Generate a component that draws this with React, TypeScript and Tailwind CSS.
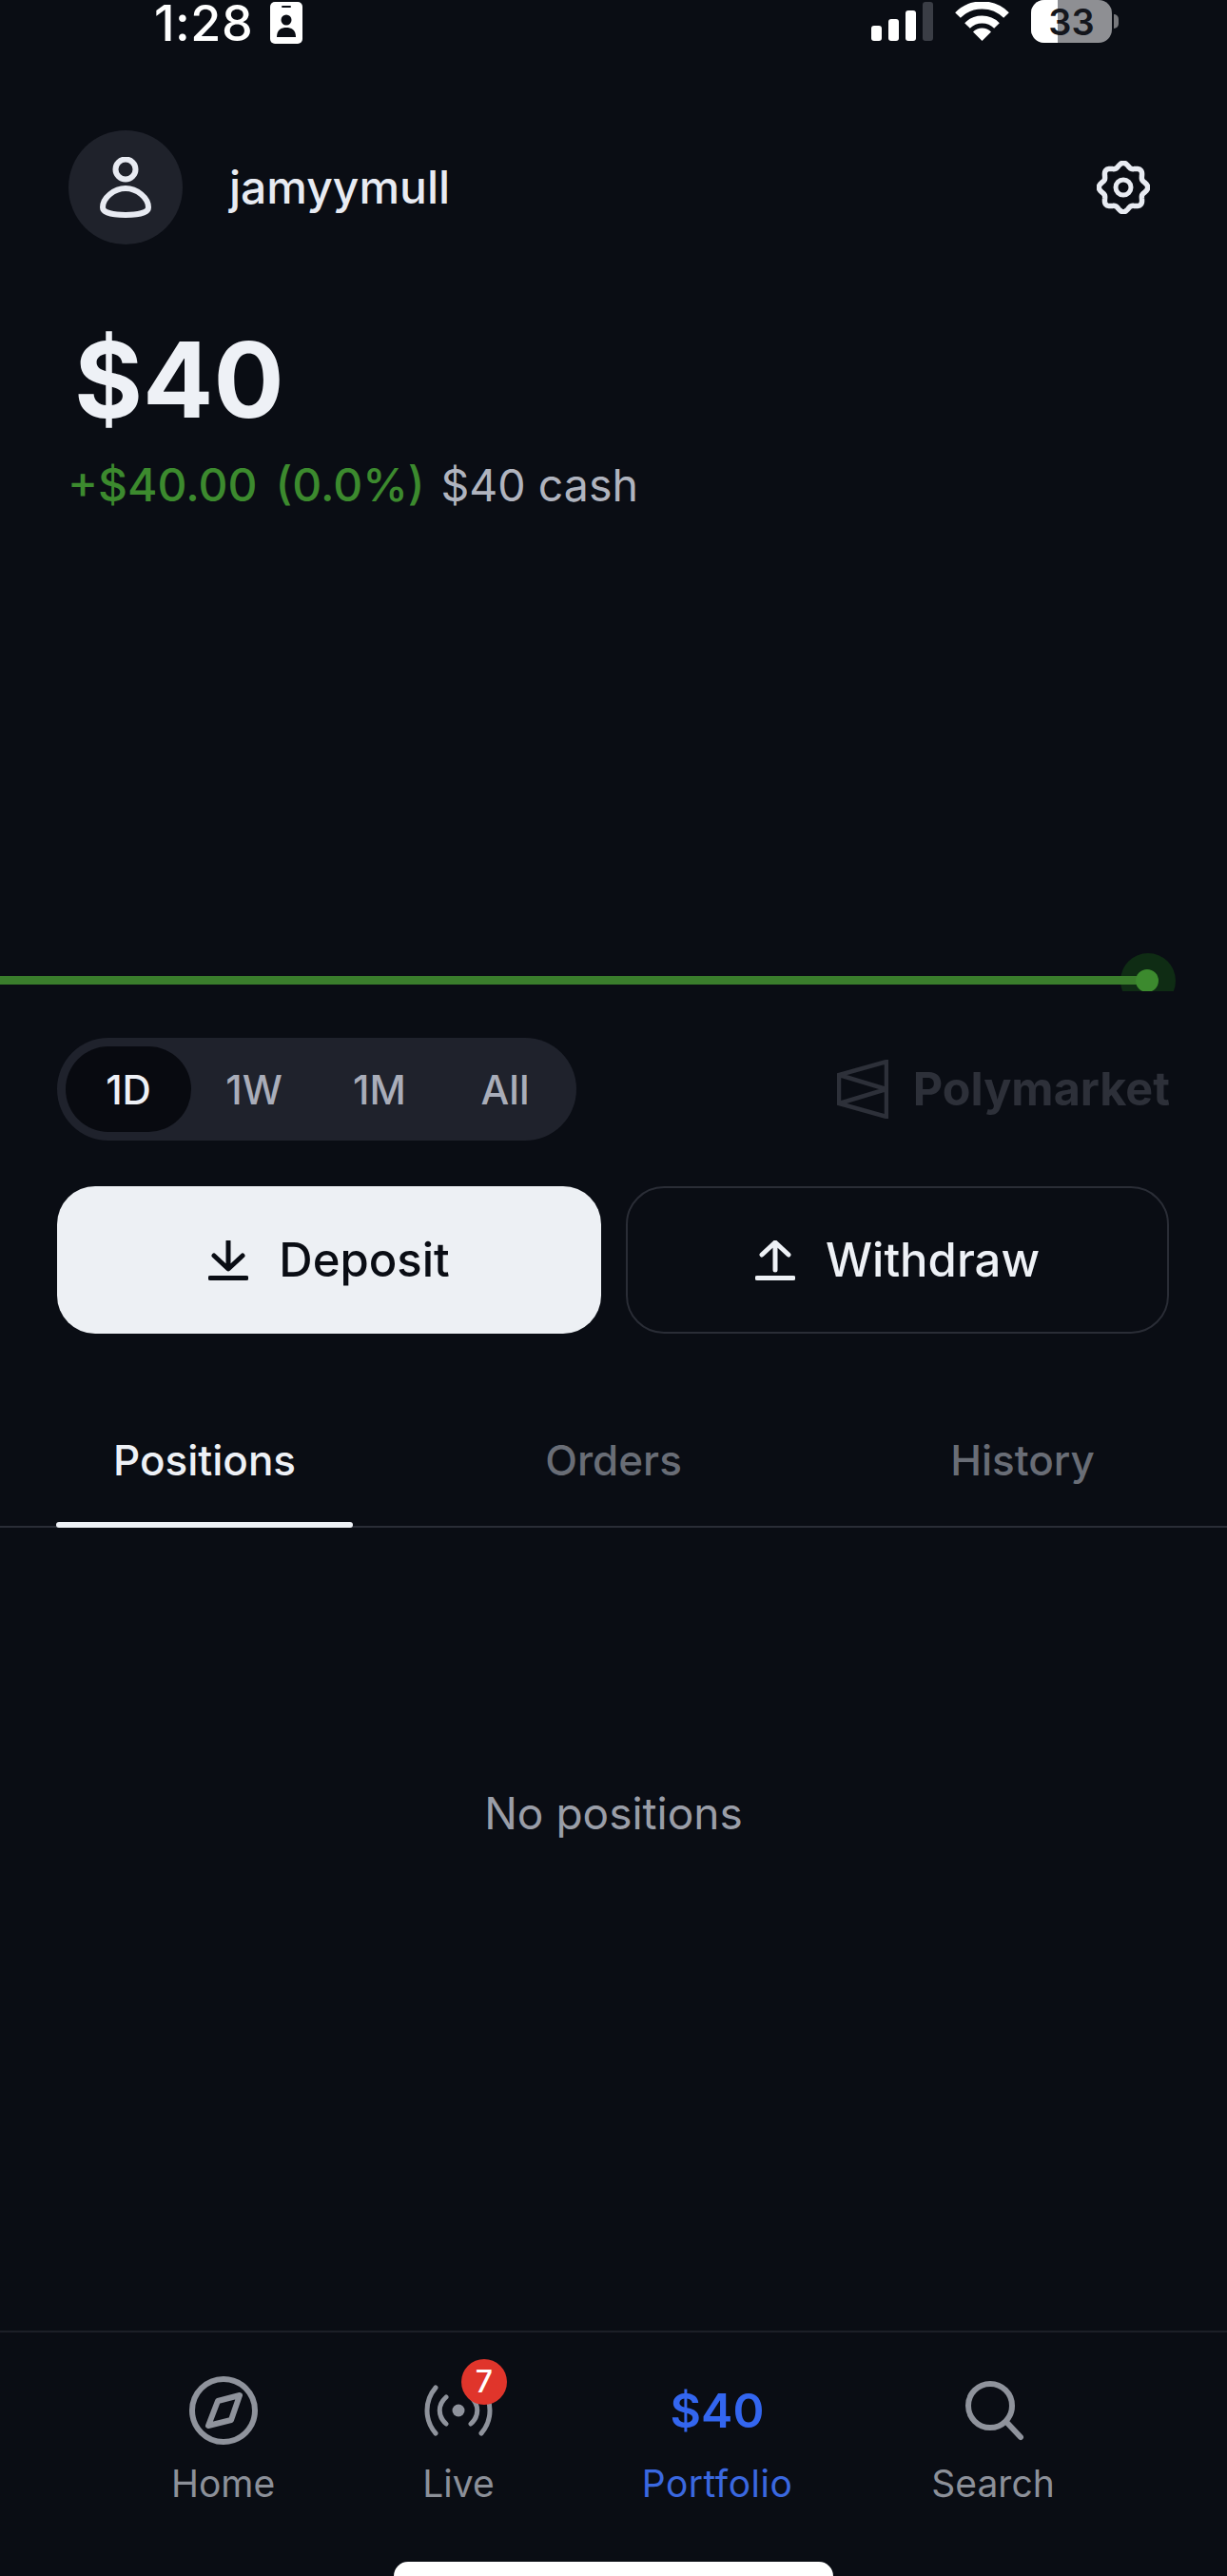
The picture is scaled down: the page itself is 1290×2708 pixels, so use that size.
import React from "react";

function gearPath() {
  const pts: string[] = [];
  for (let i = 0; i < 240; i++) {
    const t = (i / 240) * Math.PI * 2;
    const r = 23.5 + 2.2 * Math.cos(8 * t);
    const x = 28 + r * Math.sin(t);
    const y = 28 - r * Math.cos(t);
    pts.push(`${i === 0 ? "M" : "L"}${x.toFixed(2)} ${y.toFixed(2)}`);
  }
  return pts.join(" ") + " Z";
}

function TabLabel({ label, active }: { label: string; active?: boolean }) {
  return (
    <div className="flex flex-col items-center">
      <div className={`h-[106px] pt-[14px] text-[44px] leading-[54px] font-medium ${active ? "text-[#eef1f6]" : "text-[#696d76]"}`}>{label}</div>
      {active ? <div className="w-[312px] h-[6px] rounded-full bg-[#eef1f6] mb-[-2px]" /> : <div className="h-[6px] mb-[-2px]" />}
    </div>
  );
}

function NavItem({ icon, label, color, extra }: { icon: React.ReactNode; label: string; color: string; extra?: string }) {
  return (
    <div className={`flex flex-col items-center ${extra ?? ""}`}>
      <div className="h-[72px] w-[72px] flex items-center justify-center relative">{icon}</div>
      <div className={`mt-[18px] text-[39px] leading-[46px] ${color}`}>{label}</div>
    </div>
  );
}

export default function App() {
  return (
    <div className="w-[1290px] h-[2708px] bg-[#0a0d14] flex flex-col overflow-hidden text-[#eef1f6]" style={{ fontFamily: "Inter, 'Noto Sans', sans-serif" }}>
      {/* status bar */}
      <div className="h-[48px] flex items-start pl-[162px] pr-[114px] shrink-0">
        <div className="text-[52px] leading-[50px] font-medium text-white tracking-[0.5px] w-[107px]">1:28</div>
        <svg width="34" height="44" viewBox="0 0 34 44" className="ml-[15px] mt-[2px]">
          <rect width="34" height="44" rx="5" fill="#fff" />
          <rect x="12" y="4" width="10" height="2" rx="1" fill="#0a0d14" />
          <circle cx="17" cy="19" r="5.5" fill="#0a0d14" />
          <path d="M7 37 C7 29 12 27 17 27 C22 27 27 29 27 37 Z" fill="#0a0d14" />
        </svg>
        <div className="flex-1" />
        <svg width="65" height="41" viewBox="0 0 65 41" className="mt-[2px]">
          <rect x="0" y="25" width="11" height="16" rx="3" fill="#fff" />
          <rect x="18" y="18" width="11" height="23" rx="3" fill="#fff" />
          <rect x="36" y="9" width="11" height="32" rx="3" fill="#fff" />
          <rect x="54" y="0" width="11" height="41" rx="3" fill="#3a3d45" />
        </svg>
        <svg width="57" height="41" viewBox="0 0 57 41" className="ml-[23px] mt-[2px]">
          <path d="M3 14 A36 36 0 0 1 54 14" fill="none" stroke="#fff" strokeWidth="8" />
          <path d="M13 25 A22 22 0 0 1 44 25" fill="none" stroke="#fff" strokeWidth="8" />
          <path d="M28.5 41 L19 31.5 A13.5 13.5 0 0 1 38 31.5 Z" fill="#fff" />
        </svg>
        <div className="ml-[23px] flex items-center">
          <div className="relative w-[85px] h-[45px] rounded-[14px] overflow-hidden flex bg-[#8e8f93]">
            <div className="w-[28px] bg-white" />
            <div className="absolute inset-0 flex items-center justify-center text-[38px] font-semibold text-[#14161c] leading-none">33</div>
          </div>
          <div className="ml-[2px] w-[5px] h-[15px] rounded-r-full bg-[#77787c]" />
        </div>
      </div>

      {/* header */}
      <div className="mt-[89px] flex items-center pl-[72px] pr-[81px] shrink-0">
        <div className="w-[120px] h-[120px] rounded-full bg-[#1f222b] flex items-center justify-center">
          <svg width="54" height="64" viewBox="0 0 54 64">
            <circle cx="27" cy="13" r="10.5" fill="none" stroke="#e8ebf2" strokeWidth="6" />
            <path d="M27 33 C15 33 3 43 3 53 C3 59 15 61 27 61 C39 61 51 59 51 53 C51 43 39 33 27 33 Z" fill="none" stroke="#e8ebf2" strokeWidth="6" />
          </svg>
        </div>
        <div className="ml-[49px] text-[48px] leading-[56px] text-[#e8ebf2] font-medium">jamyymull</div>
        <div className="flex-1" />
        <svg width="56" height="56" viewBox="0 0 56 56">
          <path d={gearPath()} fill="none" stroke="#e8ebf2" strokeWidth="5.5" />
          <circle cx="28" cy="28" r="8" fill="none" stroke="#e8ebf2" strokeWidth="5" />
        </svg>
      </div>

      {/* balance */}
      <div className="mt-[82px] pl-[78px] text-[110px] leading-[120px] font-bold text-[#eef1f6] shrink-0">$40</div>
      <div className="mt-[21px] pl-[71px] flex items-baseline text-[48px] leading-[60px] shrink-0">
        <span className="text-[#3c8a2e] font-medium">+$40.00</span>
        <span className="ml-[19px] text-[#3c8a2e] font-medium">(0.0%)</span>
        <span className="ml-[17px] text-[46.5px] text-[#b0b4bf]">$40 cash</span>
      </div>

      {/* chart */}
      <svg width="1290" height="41" viewBox="0 0 1290 41" className="mt-[461px] shrink-0 block">
        <circle cx="1207" cy="30" r="29" fill="#0f2c14" />
        <rect x="0" y="25" width="1206" height="9" fill="#3a7d2c" />
        <circle cx="1206" cy="30" r="12" fill="#3c8a2e" />
      </svg>

      {/* range selector */}
      <div className="mt-[49px] flex items-center justify-between pl-[60px] pr-[60px] shrink-0">
        <div className="w-[546px] h-[108px] rounded-full bg-[#1f222c] flex items-center pl-[9px] text-[42px]">
          <div className="w-[132px] h-[90px] rounded-full bg-[#080a10] flex items-center justify-center text-[#eef1f6] font-medium">1D</div>
          <div className="w-[132px] text-center text-[#a9adb9] font-medium">1W</div>
          <div className="w-[132px] text-center text-[#a9adb9] font-medium">1M</div>
          <div className="w-[132px] text-center text-[#a9adb9] font-medium">All</div>
        </div>
        <div className="flex items-center">
          <svg width="54" height="62" viewBox="0 0 54 62">
            <path d="M52 2 L2 16 L52 31 L2 46 L52 60 Z M2 16 L2 46" fill="none" stroke="#2d3039" strokeWidth="4.5" strokeLinejoin="miter" />
          </svg>
          <div className="ml-[26px] text-[48.5px] leading-[60px] font-bold text-[#2d3039]">Polymarket</div>
        </div>
      </div>

      {/* buttons */}
      <div className="mt-[48px] flex gap-[26px] pl-[60px] pr-[61px] shrink-0">
        <div className="w-[572px] h-[155px] rounded-[40px] bg-[#edf0f4] flex items-center justify-center text-[#0a0d14]">
          <svg width="42" height="42" viewBox="0 0 42 42">
            <path d="M21 1 V29 M6 16 L21 30 L36 16" fill="none" stroke="#0a0d14" strokeWidth="5" strokeLinecap="round" strokeLinejoin="round" />
            <path d="M2 39.5 H40" fill="none" stroke="#0a0d14" strokeWidth="5" strokeLinecap="round" />
          </svg>
          <div className="ml-[32px] text-[49px] leading-[58px] font-medium">Deposit</div>
        </div>
        <div className="flex-1 h-[155px] rounded-[40px] border-2 border-[#2a2d36] flex items-center justify-center">
          <svg width="42" height="42" viewBox="0 0 42 42">
            <path d="M21 3 V31 M7 15 L21 2 L35 15" fill="none" stroke="#eef1f6" strokeWidth="5" strokeLinecap="round" strokeLinejoin="round" />
            <path d="M2 39.5 H40" fill="none" stroke="#eef1f6" strokeWidth="5" strokeLinecap="round" />
          </svg>
          <div className="ml-[32px] text-[49px] leading-[58px] font-medium">Withdraw</div>
        </div>
      </div>

      {/* tabs */}
      <div className="mt-[92px] grid grid-cols-3 border-b-2 border-[#2a2d36] shrink-0">
        <TabLabel label="Positions" active />
        <TabLabel label="Orders" />
        <TabLabel label="History" />
      </div>

      {/* empty state */}
      <div className="flex-1 flex justify-center pt-[272px] text-[46px] leading-[56px] text-[#9a9ea8]">No positions</div>

      {/* bottom nav */}
      <div className="h-[258px] border-t-2 border-[#1c1f27] shrink-0 flex flex-col">
        <div className="flex pl-[180px] pt-[46px]">
          <NavItem
            label="Home"
            color="text-[#8c9099]"
            icon={
              <svg width="72" height="72" viewBox="0 0 72 72">
                <circle cx="36" cy="36" r="33" fill="none" stroke="#8f939c" strokeWidth="6" />
                <path d="M53 20 L30 26 L20 52 L44 46 Z" fill="none" stroke="#8f939c" strokeWidth="6" strokeLinejoin="round" />
              </svg>
            }
          />
          <NavItem
            label="Live"
            color="text-[#8c9099]"
            extra="ml-[155px]"
            icon={
              <>
                <svg width="72" height="72" viewBox="0 0 72 72">
                  <path d="M12 12 C0 26 0 46 12 60 M60 12 C72 26 72 46 60 60 M23 22 C14 30 14 42 23 50 M49 22 C58 30 58 42 49 50" fill="none" stroke="#8f939c" strokeWidth="5" strokeLinecap="round" />
                  <circle cx="36" cy="36" r="6.5" fill="#8f939c" />
                </svg>
                <div className="absolute left-[39px] top-[-18px] w-[48px] h-[48px] rounded-full bg-[#e0352b] flex items-center justify-center text-white text-[32px] font-medium leading-none">7</div>
              </>
            }
          />
          <NavItem
            label="Portfolio"
            color="text-[#3a68e0] tracking-[0.5px]"
            extra="ml-[155px]"
            icon={<div className="text-[50px] leading-[72px] font-semibold text-[#3366f0] tracking-normal">$40</div>}
          />
          <NavItem
            label="Search"
            color="text-[#8c9099]"
            extra="ml-[146px]"
            icon={
              <svg width="72" height="72" viewBox="0 0 72 72">
                <circle cx="33" cy="31" r="23" fill="none" stroke="#8f939c" strokeWidth="6" />
                <path d="M50 48 L65 64" fill="none" stroke="#8f939c" strokeWidth="6" strokeLinecap="round" />
              </svg>
            }
          />
        </div>
        <div className="mt-auto self-center w-[462px] h-[15px] rounded-t-full rounded-b-[6px] bg-white" />
      </div>
    </div>
  );
}
